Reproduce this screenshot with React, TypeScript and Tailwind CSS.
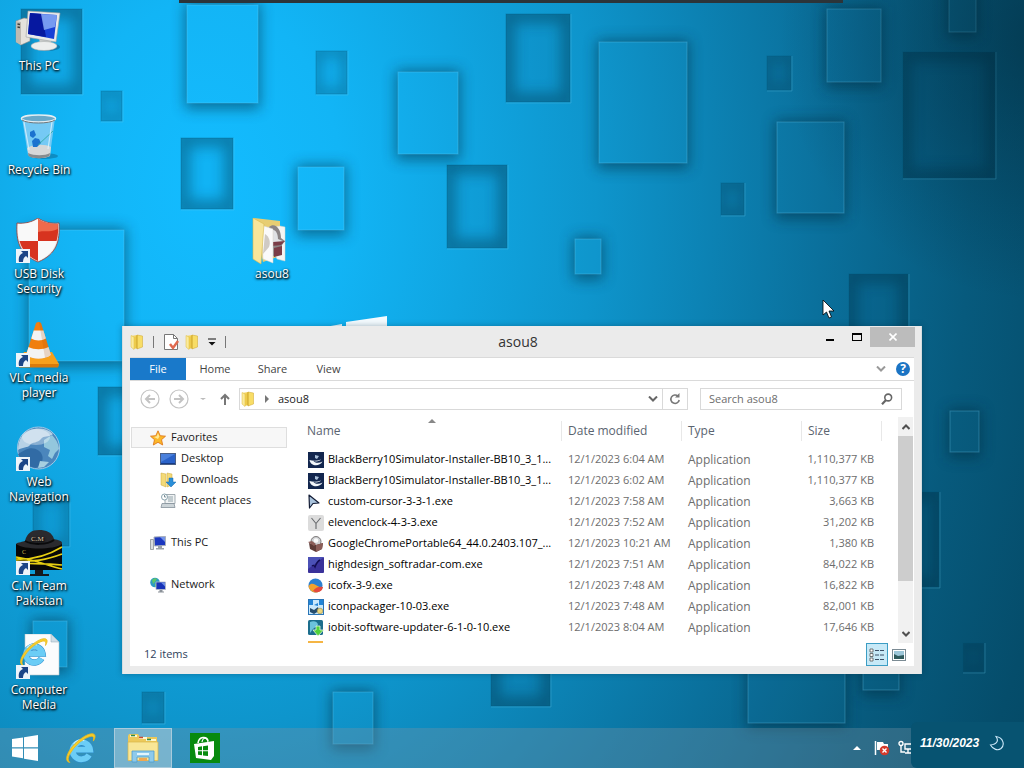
import { useState } from 'react';
import type { ReactNode } from 'react';
import clsx from 'clsx';

type Tile = [x: number, y: number, w: number, h: number];

const RAISED: Tile[] = [
  [187, 5, 71, 98],
  [298, 167, 46, 63],
  [398, 72, 60, 82],
  [599, 42, 88, 121],
  [575, 239, 26, 35],
  [29, 230, 95, 131],
  [33, 621, 34, 46],
  [333, 692, 40, 52],
  [748, 640, 97, 83],
  [863, 640, 36, 50],
  [950, 411, 29, 41],
  [777, 122, 67, 91],
  [827, 9, 54, 73],
  [949, -20, 27, 52],
];

const SUNKEN: Tile[] = [
  [21, 9, 61, 85],
  [101, 91, 21, 30],
  [181, 138, 52, 71],
  [316, 51, 31, 43],
  [506, 14, 64, 88],
  [447, 165, 60, 83],
  [98, 387, 70, 68],
  [33, 496, 36, 50],
  [142, 692, 22, 31],
  [491, 640, 59, 66],
  [963, 643, 21, 29],
  [895, 492, 44, 95],
  [849, 274, 59, 85],
  [903, 52, 92, 126],
  [767, 56, 24, 34],
  [721, 183, 23, 32],
];

function Wallpaper() {
  return (
    <svg className="absolute inset-0 h-full w-full" viewBox="0 0 1024 768" preserveAspectRatio="xMidYMid slice" aria-hidden="true">
      <defs>
        <radialGradient id="sky" gradientUnits="userSpaceOnUse" cx="0" cy="0" r="1" gradientTransform="translate(205 190) scale(980 1350)">
          <stop offset="0" stopColor="#13bcff" />
          <stop offset="0.14" stopColor="#12b5f6" />
          <stop offset="0.4" stopColor="#0e95cc" />
          <stop offset="0.63" stopColor="#0a709c" />
          <stop offset="0.78" stopColor="#075a7d" />
          <stop offset="0.9" stopColor="#054d6b" />
          <stop offset="1" stopColor="#044661" />
        </radialGradient>
        <radialGradient id="corner" gradientUnits="userSpaceOnUse" cx="1040" cy="40" r="260">
          <stop offset="0" stopColor="#01202e" stopOpacity="0.45" />
          <stop offset="1" stopColor="#01202e" stopOpacity="0" />
        </radialGradient>
        <filter id="soft" x="-50%" y="-50%" width="200%" height="200%">
          <feGaussianBlur stdDeviation="7" />
        </filter>
      </defs>
      <rect width="1024" height="768" fill="url(#sky)" />
      {SUNKEN.map(([x, y, w, h]) => (
        <g key={`${x}-${y}`}>
          <svg x={x} y={y} width={w} height={h} overflow="hidden">
            <rect width={w} height={h} fill="#013a55" opacity="0.06" />
            <rect width={w} height={h} fill="none" stroke="#012a3e" strokeWidth={w < 40 ? 8 : 18} opacity="0.38" filter="url(#soft)" />
          </svg>
          <rect x={x} y={y} width={w} height={h} fill="none" stroke="#02506f" strokeOpacity="0.3" />
          <path d={`M${x} ${y + h + 1}h${w + 1}V${y}`} fill="none" stroke="#6fd2f5" strokeOpacity="0.25" />
        </g>
      ))}
      {RAISED.map(([x, y, w, h]) => (
        <g key={`${x}-${y}`}>
          <rect x={x - 2} y={y - 2} width={w + 4} height={h + 8} fill="#012a3e" opacity="0.5" filter="url(#soft)" />
          <rect x={x} y={y} width={w} height={h} fill="url(#sky)" />
          <rect x={x} y={y} width={w} height={h} fill="#5cd0ff" fillOpacity="0.02" stroke="#7fdcff" strokeOpacity="0.28" />
        </g>
      ))}
      <rect width="1024" height="768" fill="url(#corner)" />
      <path d="M325 327l17-3v6h-17zM346 327v-5l41-6v14h-41z" fill="#f4fbff" />
      <rect x="179" width="664" height="3" fill="#2c3439" />
    </svg>
  );
}

function ShortcutArrow() {
  return (
    <g>
      <rect x="1" y="31" width="14" height="14" fill="#eef4fa" />
      <path d="M4 44c-1-5 1-8 4-9l-2-2h7v7l-2-2c-2 1-3 3-3 6z" fill="#1c4587" />
    </g>
  );
}

function BigIcon({ children, shortcut }: { children: ReactNode; shortcut?: boolean }) {
  return (
    <svg className="h-12 w-12" viewBox="0 0 48 48" aria-hidden="true">
      {children}
      {shortcut && <ShortcutArrow />}
    </svg>
  );
}

// The "e" with its golden orbit, on a 30x30 grid
function IeMark() {
  return (
    <g fill="none">
      <path d="M23.500 21.500a8.300 8 0 1 1 1-5H10" stroke="#2e8ccb" strokeWidth="6.400" />
      <path d="M23.500 21.500a8.300 8 0 1 1 1-5H10" stroke="#6bcdf6" strokeWidth="5.400" />
      <path d="M9 11c2-3 6-4.500 10-3" stroke="#c9effd" strokeWidth="1.200" />
      <path d="M5.500 28.500c-5-.5-3.500-8 2.500-15C14 6.500 24 0 28 2c2 1.200 1 4-.5 6.500.5-3 .3-4.500-1.500-4.500-4 0-12 5-17 11.500S2.500 26 5.500 28.500z" fill="#f7cd2a" stroke="#e8b91e" strokeWidth="0.800" />
    </g>
  );
}

const ThisPcIcon = () => (
  <BigIcon>
    <path d="M1 11l8-3 6 1v22l-9 4-5-3z" fill="#e4e2dc" stroke="#8b8b88" strokeWidth="0.600" />
    <path d="M1 11l5 1v23l-5-3z" fill="#bdbab2" />
    <path d="M2.500 14l2.500.5M2.500 17l2.500.5" stroke="#3f3f3c" strokeWidth="1.300" />
    <ellipse cx="32" cy="37" rx="13" ry="4" fill="#0b4f78" opacity="0.5" />
    <path d="M24 27h11l2 8H25z" fill="#c9ccca" />
    <ellipse cx="29" cy="36" rx="13" ry="4.500" fill="#eceeed" stroke="#a5a9a8" strokeWidth="0.500" />
    <path d="M13 1l32 2-4 29-30-5z" fill="#e9eaea" stroke="#9c9fa1" strokeWidth="0.600" />
    <path d="M15 3l27 2-3 24-26-5z" fill="#1740d6" />
    <path d="M15 3l12 1 4 23-18-3z" fill="#0618a0" />
    <path d="M26 4l16 1-2 12-11 3z" fill="#8fb0f7" opacity="0.8" />
  </BigIcon>
);

const RecycleIcon = () => (
  <BigIcon>
    <ellipse cx="29" cy="42" rx="14" ry="3" fill="#0a4668" opacity="0.35" />
    <path d="M7 4l6 37c6 4 16 4 22 0l5-37z" fill="#8fd0f5" opacity="0.8" />
    <path d="M12 34c7-4 18-4 24-1l-1 9c-6 3-16 3-21 0z" fill="#d5d7d8" />
    <path d="M13 39c6 3 17 3 22 0l-.5 3c-6 3-16 3-21 0z" fill="#878b8e" />
    <path d="M15 18l4-2 2 5-3 3-3-2zM17 27l3-3 4 1 2 4-4 4h-4z" fill="#1b72cf" />
    <path d="M38 17L23 31" stroke="#2aa79c" strokeWidth="0.800" />
    <path d="M9 8l5 28M37 8l-4 27" stroke="#e8f8ff" strokeWidth="1.200" opacity="0.7" />
    <ellipse cx="23.500" cy="4.500" rx="17" ry="3.500" fill="#6aa9c9" stroke="#e5eef2" strokeWidth="1.500" />
    <path d="M7 6c5 4 28 4 33 0" stroke="#70777b" strokeWidth="1" fill="none" />
  </BigIcon>
);

const ShieldIcon = () => (
  <BigIcon shortcut>
    <path d="M2 5c8 1 15-1 21-5 6 4 13 6 21 5 1 18-2 31-21 39C4 36 1 23 2 5z" fill="#e9e9ea" stroke="#9a3a31" strokeWidth="0.800" />
    <path d="M23 1c6 4 12 5 20 5 .4 7 0 12-1.500 17H23zM23 23v20C12 38 6.500 31 4.500 23z" fill="#d7331f" />
    <path d="M23 1c6 4 12 5 20 5l-.3 5C34 15 28 12 23 14z" fill="#ef6a4c" />
    <path d="M23 1C17 5 11 6 3 6c-.4 7 0 12 1.500 17H23zM23 23v20c11-5 16.500-12 18.500-20z" fill="#fbfbfc" opacity="0.85" />
  </BigIcon>
);

const VlcIcon = () => (
  <BigIcon shortcut>
    <path d="M9 30L3 42l1 3h39l1-3-7-12z" fill="#f7a01c" />
    <path d="M3 42h41l-1 3.500H4z" fill="#d97a0a" />
    <path d="M21 1q2.500-2 5 0l10 32c-6 5-19 5-25 0z" fill="#f07f10" />
    <path d="M18.700 8.500h9.700l2.500 8c-4 2.500-10.500 2.500-14.700 0zM13.500 25c6 3 14 3 20 0l2.500 8c-7 5-18 5-25 0z" fill="#f3f3f3" />
    <path d="M26 1l10 32-6 3L24 0z" fill="#b7550a" opacity="0.2" />
  </BigIcon>
);

const GlobeIcon = () => (
  <BigIcon shortcut>
    <circle cx="23.500" cy="22" r="21" fill="#4b86bc" stroke="#9fc8e6" />
    <path d="M7 10C14 1 30 0 38 8c-5 4-9 1-12 5s-9 3-11 6-8 2-12 5c0-5 1-10 4-14z" fill="#b7d2e6" />
    <path d="M29 14l8-5c5 5 7 11 7 14l-4 4-3 6-4-3 2-6-6-3z" fill="#93c7dd" />
    <path d="M10 24c8-4 15 0 17 5s-1 10-6 13C12 41 5 34 3 28z" fill="#316ba5" />
    <path d="M25 35l9 1-5 5-6 1z" fill="#a6cfe0" />
    <ellipse cx="21" cy="11" rx="14" ry="8" fill="#fff" opacity="0.35" />
  </BigIcon>
);

const CmIcon = () => (
  <BigIcon shortcut>
    <rect x="1" y="14" width="46" height="26" fill="#080808" />
    <path d="M1 29C18 30 32 26 47 17M1 31c18 1 30-1 46-7M1 33c18 1 30 0 46 2M1 27c20 3 30 8 46 12" stroke="#e8cf12" strokeWidth="1.700" fill="none" />
    <path d="M20 40h8v4h6v2H15v-2h5z" fill="#16181c" />
    <path d="M1 14c2-2 7-2 9-3C12 3 17 0 24 0s13 2 15 9c4 1 9 2 8 5-8 6-38 6-46 0z" fill="#2a2a2e" />
    <path d="M10 11c7 4 22 4 29-1" stroke="#0c0c0d" strokeWidth="2" fill="none" />
    <text x="16" y="11" fontSize="7" fontFamily="Liberation Serif, serif" fill="#e3cda8">C.M</text>
    <text x="7" y="24" fontSize="6" fontFamily="Liberation Serif, serif" fill="#d8bb56">C</text>
  </BigIcon>
);

const MediaIcon = () => (
  <BigIcon shortcut>
    <path d="M10 0h26l8 8v33H10z" fill="#fbfcfd" stroke="#b9c6cf" strokeWidth="0.600" />
    <path d="M36 0v8h8z" fill="#cfdde7" stroke="#8fa8b7" strokeWidth="0.500" />
    <g transform="translate(3 3)">
      <IeMark />
    </g>
  </BigIcon>
);

const FolderIcon = () => (
  <BigIcon>
    <path d="M5 0l27 3v35l-17 6z" fill="#e7cd72" />
    <path d="M15 10l17-2 5 1v34l-8-2z" fill="#f5f5f3" stroke="#d9d4c4" strokeWidth="0.500" />
    <path d="M21 9c6-5 12 2 12 11l4 3-3 4v9l-12 3z" fill="#8b8485" />
    <path d="M22 14c4-5 8 0 8 7l7 3-12 4z" fill="#dfe1e4" />
    <path d="M25 24l12-1-4 4-8 1zM26 30l8-2v9l-8 2z" fill="#7b3d47" />
    <path d="M13 7l12 4v34l-10-4z" fill="#fafafa" stroke="#d5d2ca" strokeWidth="0.500" />
    <path d="M17 16c4 2 6 8 4 13l-6 7z" fill="#bcb5ad" opacity="0.7" />
    <path d="M5 0l11 6-3 40-8-5z" fill="#f7e59a" stroke="#d8b94f" strokeWidth="0.600" />
  </BigIcon>
);

const SHORTCUTS = [
  { label: 'This PC', icon: <ThisPcIcon /> },
  { label: 'Recycle Bin', icon: <RecycleIcon /> },
  { label: 'USB Disk Security', icon: <ShieldIcon /> },
  { label: 'VLC media player', icon: <VlcIcon /> },
  { label: 'Web Navigation', icon: <GlobeIcon /> },
  { label: 'C.M Team Pakistan', icon: <CmIcon /> },
  { label: 'Computer Media', icon: <MediaIcon /> },
];

function DesktopItem({ label, icon }: { label: string; icon: ReactNode }) {
  return (
    <button className="flex h-[104px] w-[78px] flex-col items-center px-1 pt-[10px] text-xs leading-[15px] text-white [text-shadow:1px_1px_2px_#000,0_1px_3px_#000]">
      {icon}
      <span>{label}</span>
    </button>
  );
}

function SmallFolder() {
  return (
    <svg className="h-4 w-4 shrink-0" viewBox="0 0 16 16" aria-hidden="true">
      <path d="M2 2l6-1v13H4z" fill="#f3d566" />
      <path d="M2 1.500l3 1.500v12.500L2 13z" fill="#fbeb9c" stroke="#dcb93e" strokeWidth="0.500" />
      <path d="M5 3l3-1v12l-3 1z" fill="#edcb4c" />
      <path d="M8 1l5.500 1v11L8 15z" fill="#f8dd66" stroke="#cfa52a" strokeWidth="0.500" />
      <path d="M8 1v14" stroke="#c79c22" strokeWidth="0.600" />
    </svg>
  );
}

const NavIcon = ({ children }: { children: ReactNode }) => (
  <svg className="h-4 w-4 shrink-0" viewBox="0 0 16 16" aria-hidden="true">
    {children}
  </svg>
);

const starIcon = (
  <NavIcon>
    <path d="M8 .8l2.200 4.900 5.300.5-4 3.500 1.200 5.300L8 12.300 3.300 15l1.200-5.300-4-3.500 5.300-.5z" fill="#fbb829" stroke="#e0791b" strokeWidth="0.900" />
    <path d="M8 3l1.400 3.500L8 9 4 7l2.700-.7z" fill="#ffe896" />
  </NavIcon>
);

const desktopIcon = (
  <NavIcon>
    <rect x="0.500" y="2.500" width="15" height="11" fill="#2a62c9" stroke="#4a5f86" />
    <path d="M1 3h14L1 11z" fill="#4a80dc" />
    <path d="M1 12.500h14" stroke="#173c86" />
  </NavIcon>
);

const downloadsIcon = (
  <NavIcon>
    <path d="M1 1l5 1v13l-5-2zM7 1l5 1v11l-5 2z" fill="#f3da78" stroke="#cda93c" strokeWidth="0.500" />
    <path d="M9 6h4v4h3l-5 5-5-5h3z" fill="#2a8fd8" stroke="#1b68ac" strokeWidth="0.500" />
  </NavIcon>
);

const recentIcon = (
  <NavIcon>
    <path d="M5 1.500h10v9H5z" fill="#f0f3f4" stroke="#8b979e" strokeWidth="0.800" />
    <path d="M8 4h5M8 6h5M8 8h5" stroke="#7c919b" strokeWidth="0.800" />
    <path d="M2 10.500h12l1 4H1z" fill="#ccd4d8" stroke="#84919a" strokeWidth="0.800" />
    <circle cx="4.500" cy="4" r="3" fill="#fff" stroke="#6f8e9b" strokeWidth="0.800" />
    <path d="M4.500 2v2H6" stroke="#476470" strokeWidth="0.700" fill="none" />
  </NavIcon>
);

const pcIcon = (
  <NavIcon>
    <path d="M.5 4.500h3v10h-3z" fill="#d9dcde" stroke="#7c8287" strokeWidth="0.700" />
    <path d="M4 2l11.500-.5v9L4.500 11z" fill="#1c38c0" stroke="#a9b0ba" />
    <path d="M10 2h5v5z" fill="#7393ea" />
    <path d="M8 11h4v2h2v1.500H6V13h2z" fill="#9ca2a8" />
  </NavIcon>
);

const networkIcon = (
  <NavIcon>
    <circle cx="5" cy="5.500" r="4.800" fill="#2d9bc4" />
    <path d="M2 3c2-2 4-2 5-1L5 5 3 7zM5 7l3-1v3L5 10z" fill="#5dc56a" />
    <path d="M6 5h9.500v7.500H6z" fill="#1733b8" stroke="#b8bec7" strokeWidth="0.800" />
    <path d="M11 5.500h4v4z" fill="#6c8de6" />
    <path d="M9.500 13h3v1.500h1.500v1H8v-1h1.500z" fill="#8b9299" />
  </NavIcon>
);

const bbIcon = (
  <NavIcon>
    <rect width="16" height="16" fill="#12264e" />
    <path d="M1.500 8c1 6.500 10 7 13 1.500-3.500 2-8 1.500-9-.5 3 1 6.500 0 7.500-1.500C9 9 5 9 1.500 8z" fill="#f2f6fa" />
    <path d="M7 3l4 1-2 3-2-1z" fill="#a9bfd9" />
  </NavIcon>
);

const cursorIcon = (
  <NavIcon>
    <path d="M1 1l10 8-6 .5L1.500 14z" fill="#a9c3dc" stroke="#131c35" strokeWidth="1.200" strokeLinejoin="round" />
  </NavIcon>
);

const clockIcon = (
  <NavIcon>
    <rect width="16" height="16" rx="2" fill="#dcdcdc" />
    <path d="M3.500 3L8 8.500 12.500 3M8 8.500V14" stroke="#66696c" strokeWidth="1.100" fill="none" />
  </NavIcon>
);

const boxIcon = (
  <NavIcon>
    <circle cx="8" cy="5.500" r="5" fill="#cfd1d3" stroke="#65605f" strokeWidth="0.800" />
    <path d="M1 7l7 2 7-2-1 6-6 3-6-3z" fill="#5d3b37" />
    <path d="M8 9l7-2-1 6-6 3zM0 6l4-1 4 3-2 2z" fill="#8b5d58" />
    <circle cx="8" cy="4.500" r="2.300" fill="#fafafa" />
  </NavIcon>
);

const designIcon = (
  <NavIcon>
    <rect width="16" height="16" rx="1" fill="#3a329a" />
    <path d="M0 0h16L0 12z" fill="#4b51b6" />
    <path d="M4 9c1-1 2-1 3 1 1-3 3-6 5-7" stroke="#120d52" strokeWidth="1.400" fill="none" />
  </NavIcon>
);

const icofxIcon = (
  <NavIcon>
    <circle cx="7.500" cy="7.500" r="7" fill="#2c80cf" />
    <path d="M.5 8c3-4 6-2 9 0s4 1 5 1c-1 4-4 5.500-7 5.500S1 12 .5 8z" fill="#f2a22c" />
    <path d="M5 13c2-2 4-5 10-4-.5 4-5 7-10 4z" fill="#e34a3e" />
  </NavIcon>
);

const packagerIcon = (
  <NavIcon>
    <rect x="0.500" y="0.500" width="15" height="15" fill="#c9e8fb" stroke="#2a75b7" />
    <path d="M1 1h4v5H1zM11 1h4v5h-4zM6 6l4-2v3z" fill="#2385d6" />
    <path d="M2 9l4 2 4-3 1 4-5 3-4-2z" fill="#264d6c" />
    <circle cx="12" cy="12" r="2.800" fill="#ecd67f" stroke="#9b8c46" strokeWidth="0.600" />
  </NavIcon>
);

const iobitIcon = (
  <NavIcon>
    <rect width="15" height="15" rx="1.500" fill="#1c6e8d" />
    <path d="M2 2c4-2 8 0 8 3L5 9 2 13z" fill="#6cc3dc" />
    <path d="M8 6h4v4h3.500l-5.500 6-5-6h3z" fill="#52d23a" stroke="#e7f7df" strokeWidth="0.800" />
  </NavIcon>
);

const orangeIcon = (
  <NavIcon>
    <rect width="15" height="15" fill="#f5b544" />
  </NavIcon>
);

const FILES = [
  { icon: bbIcon, name: 'BlackBerry10Simulator-Installer-BB10_3_1...', date: '12/1/2023 6:04 AM', size: '1,110,377 KB' },
  { icon: bbIcon, name: 'BlackBerry10Simulator-Installer-BB10_3_1...', date: '12/1/2023 6:02 AM', size: '1,110,377 KB' },
  { icon: cursorIcon, name: 'custom-cursor-3-3-1.exe', date: '12/1/2023 7:58 AM', size: '3,663 KB' },
  { icon: clockIcon, name: 'elevenclock-4-3-3.exe', date: '12/1/2023 7:52 AM', size: '31,202 KB' },
  { icon: boxIcon, name: 'GoogleChromePortable64_44.0.2403.107_...', date: '12/1/2023 10:21 AM', size: '1,380 KB' },
  { icon: designIcon, name: 'highdesign_softradar-com.exe', date: '12/1/2023 7:51 AM', size: '84,022 KB' },
  { icon: icofxIcon, name: 'icofx-3-9.exe', date: '12/1/2023 7:48 AM', size: '16,822 KB' },
  { icon: packagerIcon, name: 'iconpackager-10-03.exe', date: '12/1/2023 7:48 AM', size: '82,001 KB' },
  { icon: iobitIcon, name: 'iobit-software-updater-6-1-0-10.exe', date: '12/1/2023 8:04 AM', size: '17,646 KB' },
];

function TitleBar() {
  return (
    <header className="relative flex h-[31px] items-center justify-between pl-[6px]">
      <div className="flex items-center text-[#555]">
        <SmallFolder />
        <span className="mx-2 h-3 w-px bg-[#777]" />
        <button aria-label="Properties" className="ml-px">
          <svg className="h-[18px] w-4" viewBox="0 0 16 18">
            <path d="M1.500 1.500h9l4 4v11h-13z" fill="#fff" stroke="#777" />
            <path d="M10.500 1.500v4h4" fill="none" stroke="#777" />
            <path d="M7 11l3 4 5-7" stroke="#e0694f" strokeWidth="2.500" fill="none" />
          </svg>
        </button>
        <button aria-label="New folder" className="ml-[5px]"><SmallFolder /></button>
        <button aria-label="Customize toolbar" className="ml-2">
          <svg className="h-2 w-2" viewBox="0 0 8 8"><path d="M0 1h8" stroke="#111" /><path d="M.5 4h7L4 7.500z" fill="#111" /></svg>
        </button>
        <span className="ml-[9px] h-3 w-px bg-[#777]" />
      </div>
      <h1 className="pointer-events-none absolute top-[6px] right-10 left-8 text-center text-sm leading-5 text-[#333]">asou8</h1>
      <div className="flex self-start pt-px pr-[6px]">
        <button aria-label="Minimize" className="flex h-5 w-[27px] items-center justify-center pt-[6px]"><span className="h-[2px] w-2 bg-black" /></button>
        <button aria-label="Maximize" className="flex h-5 w-[27px] items-center justify-center"><span className="h-2 w-[10px] border border-t-2 border-black" /></button>
        <button aria-label="Close" className="flex h-5 w-[45px] items-center justify-center bg-[#bcbcbc]">
          <svg className="h-2 w-2" viewBox="0 0 8 8"><path d="M.5.5l7 7M7.500.5l-7 7" stroke="#fff" strokeWidth="1.600" /></svg>
        </button>
      </div>
    </header>
  );
}

function Ribbon() {
  return (
    <nav className="flex h-6 border-y border-[#dadada] bg-white text-[11px] text-[#444]">
      <button className="w-14 bg-[#1979ca] text-white">File</button>
      <button className="w-[58px]">Home</button>
      <button className="w-[57px]">Share</button>
      <button className="w-[55px]">View</button>
      <div className="ml-auto flex items-center gap-[10px] pr-1">
        <button aria-label="Expand the ribbon">
          <svg className="h-[6px] w-[10px]" viewBox="0 0 10 6"><path d="M1 .5l4 4 4-4" stroke="#999" strokeWidth="2" fill="none" /></svg>
        </button>
        <button aria-label="Help" className="flex h-[14px] w-[14px] items-center justify-center rounded-full bg-[#1b74c4] text-xs font-bold leading-none text-white">?</button>
      </div>
    </nav>
  );
}

function AddressRow() {
  const [query, setQuery] = useState('');
  return (
    <div className="flex h-9 items-center pr-3 pl-[10px]">
      <button aria-label="Back" className="mr-[9px]">
        <svg className="h-5 w-5" viewBox="0 0 20 20" fill="none" stroke="#c3c3c3"><circle cx="10" cy="10" r="9" strokeWidth="1.200" /><path d="M15 10H6M10 6l-4 4 4 4" strokeWidth="2" /></svg>
      </button>
      <button aria-label="Forward" className="mr-[10px]">
        <svg className="h-5 w-5" viewBox="0 0 20 20" fill="none" stroke="#c3c3c3"><circle cx="10" cy="10" r="9" strokeWidth="1.200" /><path d="M5 10h9M10 6l4 4-4 4" strokeWidth="2" /></svg>
      </button>
      <button aria-label="Recent locations" className="mr-3">
        <svg className="h-1 w-2" viewBox="0 0 8 4"><path d="M1 1h6L4 3z" fill="#bbb" /></svg>
      </button>
      <button aria-label="Up" className="mr-2">
        <svg className="h-3 w-3" viewBox="0 0 12 12"><path d="M6 12V2M2 6l4-4 4 4" stroke="#777" strokeWidth="2" fill="none" /></svg>
      </button>
      <div className="flex h-[22px] flex-1 items-center border border-[#d9d9d9] text-[11px]">
        <SmallFolder />
        <svg className="mx-2 h-2 w-[6px]" viewBox="0 0 6 8"><path d="M1 0l4 4-4 4z" fill="#777" /></svg>
        <button>asou8</button>
        <button aria-label="Previous locations" className="mr-1 ml-auto">
          <svg className="h-[6px] w-[10px]" viewBox="0 0 10 6"><path d="M1 .5l4 4 4-4" stroke="#666" strokeWidth="2" fill="none" /></svg>
        </button>
        <button aria-label="Refresh" className="flex h-full w-[25px] items-center justify-center border-l border-[#d9d9d9]">
          <svg className="h-3 w-3" viewBox="0 0 12 12"><path d="M9 3.200A4.200 4.200 0 1 0 10.200 7" stroke="#777" strokeWidth="1.600" fill="none" /><path d="M6 4.500h4.500V0z" fill="#777" /></svg>
        </button>
      </div>
      <label className="ml-3 flex h-[22px] w-[202px] items-center border border-[#d9d9d9] px-2 text-[11px]">
        <input aria-label="Search asou8" placeholder="Search asou8" value={query} onChange={(e) => setQuery(e.target.value)} className="min-w-0 flex-1 bg-transparent placeholder:text-[#6d6d6d] outline-none" />
        <svg className="h-3 w-3" viewBox="0 0 12 12" fill="none" stroke="#666"><circle cx="7.200" cy="4.500" r="3.400" strokeWidth="1.600" /><path d="M5 7L1 11.200" strokeWidth="2.200" /></svg>
      </label>
    </div>
  );
}

function NavItem({ icon, label, nested }: { icon: ReactNode; label: string; nested?: boolean }) {
  return (
    <button className={clsx('flex h-[21px] w-full items-center gap-[5px]', nested ? 'pl-[30px]' : 'pl-5')}>
      {icon}
      {label}
    </button>
  );
}

function Sidebar() {
  return (
    <aside className="flex w-[170px] shrink-0 flex-col pt-[10px] text-[11px]">
      <button className="ml-px flex h-[21px] w-[156px] items-center gap-[5px] border border-[#dedede] bg-[#f7f7f7] pl-[18px]">
        {starIcon}
        Favorites
      </button>
      <NavItem icon={desktopIcon} label="Desktop" nested />
      <NavItem icon={downloadsIcon} label="Downloads" nested />
      <NavItem icon={recentIcon} label="Recent places" nested />
      <div className="mt-[21px]"><NavItem icon={pcIcon} label="This PC" /></div>
      <div className="mt-[21px]"><NavItem icon={networkIcon} label="Network" /></div>
    </aside>
  );
}

function Heading({ children, sorted }: { children: string; sorted?: boolean }) {
  return (
    <th className="relative h-8 p-0 pb-1 text-left font-normal text-[#5a6470]">
      <button className="w-full border-r border-[#e8e8e8] pl-[6px] text-left text-xs leading-5">{children}</button>
      {sorted && <svg className="absolute top-[2px] left-1/2 h-1 w-2 -translate-x-1" viewBox="0 0 8 4"><path d="M0 4l4-4 4 4z" fill="#888" /></svg>}
    </th>
  );
}

function FileTable() {
  return (
    <div className="min-w-0 flex-1 overflow-hidden pl-px">
      <table className="w-full table-fixed border-collapse text-[11px]">
        <colgroup>
          <col />
          <col className="w-[120px]" />
          <col className="w-[120px]" />
          <col className="w-[80px]" />
          <col className="w-4" />
        </colgroup>
        <thead>
          <tr>
            <Heading sorted>Name</Heading>
            <Heading>Date modified</Heading>
            <Heading>Type</Heading>
            <Heading>Size</Heading>
            <td />
          </tr>
        </thead>
        <tbody className="text-[#6d6d6d]">
          {FILES.map((file, i) => (
            <tr key={i} className="h-[21px] whitespace-nowrap">
              <td className="p-0 pl-[7px] text-black">
                <div className="flex items-center gap-1">
                  {file.icon}
                  {file.name}
                </div>
              </td>
              <td className="p-0 pl-[6px]">{file.date}</td>
              <td className="p-0 pl-[6px] text-xs">Application</td>
              <td className="p-0 pr-2 text-right">{file.size}</td>
              <td />
            </tr>
          ))}
          <tr className="h-[21px]">
            <td className="p-0 pl-[7px]">{orangeIcon}</td>
          </tr>
        </tbody>
      </table>
    </div>
  );
}

function ScrollBar() {
  return (
    <div className="flex w-[15px] shrink-0 flex-col bg-[#f1f1f1]">
      <button aria-label="Scroll up" className="flex h-[19px] items-center justify-center">
        <svg className="h-[6px] w-2" viewBox="0 0 8 6"><path d="M.5 5L4 1.500 7.500 5" stroke="#505050" strokeWidth="2" fill="none" /></svg>
      </button>
      <div className="h-[145px] bg-[#cdcdcd]" />
      <button aria-label="Scroll down" className="mt-auto flex h-[19px] items-center justify-center">
        <svg className="h-[6px] w-2" viewBox="0 0 8 6"><path d="M.5 1L4 4.500 7.500 1" stroke="#505050" strokeWidth="2" fill="none" /></svg>
      </button>
    </div>
  );
}

function StatusBar() {
  return (
    <footer className="flex h-[23px] items-center justify-between pr-1 pl-[14px] text-[11px] text-[#2f3f5c]">
      <span>12 items</span>
      <div className="flex items-center">
        <button aria-label="Details view" className="flex h-[23px] w-[22px] items-center justify-center border border-[#3c9dc4] bg-[#c7e9f7]">
          <svg className="h-[14px] w-4" viewBox="0 0 16 14">
            <path d="M1 1h3v3H1zM1 5.500h3v3H1zM1 10h3v3H1z" fill="#fff" stroke="#555" strokeWidth="0.800" />
            <path d="M6 2.500h4m1 0h4M6 7h4m1 0h4M6 11.500h4m1 0h4" stroke="#3c4f66" />
          </svg>
        </button>
        <button aria-label="Thumbnail view" className="flex h-[23px] w-[22px] items-center justify-center">
          <svg className="h-3 w-[14px]" viewBox="0 0 14 12">
            <rect x="0.500" y="0.500" width="13" height="11" fill="#fff" stroke="#7b8b94" />
            <path d="M2 2h10v8H2z" fill="#9cc6d8" />
            <path d="M2 5l4 2 6-1v4H2z" fill="#2f5a5c" />
          </svg>
        </button>
      </div>
    </footer>
  );
}

function ExplorerWindow() {
  return (
    <section className="absolute top-[326px] right-[102px] left-[122px] border-x border-[#d5dde0] bg-[#ebebeb] px-[7px] pb-2 shadow-[0_0_6px_rgba(0,40,60,0.35)]">
      <div className="-mx-[7px]"><TitleBar /></div>
      <div className="bg-white text-[#1a1a1a]">
        <Ribbon />
        <AddressRow />
        <div className="flex h-[226px]">
          <Sidebar />
          <FileTable />
          <ScrollBar />
          <div className="w-px" />
        </div>
        <StatusBar />
      </div>
    </section>
  );
}

function Taskbar() {
  return (
    <footer className="relative flex h-10 items-stretch bg-[#7893a3]/35">
      <button aria-label="Start" className="flex w-[50px] items-center justify-center">
        <svg className="h-[26px] w-[26px]" viewBox="0 0 26 26" fill="#fff"><path d="M0 4l11-1.500V12.300H0zM12 2.300L26 0v12.300H12zM0 13.500h11v9.700L0 21.500zM12 13.500h14V26l-14-2.300z" /></svg>
      </button>
      <button aria-label="Internet Explorer" className="flex w-16 items-center justify-center pr-1">
        <svg className="h-8 w-8" viewBox="0 0 30 30"><IeMark /></svg>
      </button>
      <button aria-label="File Explorer" className="flex w-[58px] items-center justify-center border border-[#a9cbdc] bg-[#a5cadb]/60">
        <svg className="h-[30px] w-8" viewBox="0 0 32 30">
          <path d="M1 3l1-2h9l2 3h17v24H1z" fill="#edc95a" />
          <path d="M3 3h7M12 5h8M19 7h10" stroke="#fff7cf" strokeWidth="2" />
          <path d="M4 2.500h4M20 6.500h4" stroke="#2f8c4a" strokeWidth="1.500" />
          <path d="M12 4.500h4" stroke="#c94b32" strokeWidth="1.500" />
          <path d="M1 9h30v18.500H1z" fill="#f8e696" stroke="#d8b54a" strokeWidth="0.700" />
          <path d="M5 18h22v11h-5v-5H10v5H5z" fill="#8ecaeb" stroke="#4b9dcf" strokeWidth="0.800" />
          <path d="M10 21h12" stroke="#e2f5fd" strokeWidth="2" />
          <path d="M12 25h8v3h-8z" fill="#f0a851" />
        </svg>
      </button>
      <button aria-label="Store" className="flex w-[66px] items-center justify-center">
        <svg className="h-[30px] w-[30px]" viewBox="0 0 30 30">
          <rect width="30" height="30" fill="#078a0e" />
          <path d="M8 10c1-7 9-7 10-2" stroke="#fff" strokeWidth="1.600" fill="none" />
          <path d="M12 9c1-5 5-5 6 0" stroke="#fff" strokeWidth="1.200" fill="none" />
          <path d="M4 11l20-3v15l-3 4-15-2z" fill="#fff" />
          <path d="M8 14l4-.7v4H8zM13 13.200l5-.8v4.900h-5zM8 18.300h4v4l-4-.6zM13 18.300h5V23l-5-.6z" fill="#078a0e" />
        </svg>
      </button>
      <div className="mr-[112px] ml-auto flex items-center">
        <button aria-label="Show hidden icons" className="mr-[13px]">
          <svg className="h-1 w-2" viewBox="0 0 8 4"><path d="M0 4l4-4 4 4z" fill="#fff" /></svg>
        </button>
        <button aria-label="Action Center" className="mr-2">
          <svg className="h-4 w-4" viewBox="0 0 16 16">
            <path d="M1.500 1v14" stroke="#fff" strokeWidth="1.500" />
            <path d="M3 2h6l1 2h4v6H3z" fill="#fff" />
            <circle cx="10.500" cy="10.500" r="4.800" fill="#d43a2b" />
            <path d="M8.500 8.500l4 4m0-4l-4 4" stroke="#fff" strokeWidth="1.400" />
          </svg>
        </button>
        <button aria-label="Network">
          <svg className="h-4 w-[14px]" viewBox="0 0 14 16" fill="none" stroke="#fff">
            <circle cx="3" cy="3.500" r="2" strokeWidth="1.400" />
            <path d="M3 6v6h4M14 4H7v5h7M10 9v4M7 13h7" strokeWidth="1.400" />
          </svg>
        </button>
      </div>
      <div className="absolute right-0 bottom-0 flex h-[46px] w-[113px] items-start rounded-tl-md rounded-bl-md bg-[#075371] pt-[13px] pl-[9px] text-white">
        <time className="font-['Liberation_Sans',sans-serif] text-xs leading-4 font-bold italic">11/30/2023</time>
        <svg className="ml-[10px] h-4 w-4" viewBox="0 0 16 16"><path d="M7 1.500c3 4 1 8-5.500 8.500C4 14.500 9 16 12 13.500 16 10 14.500 2.500 7 1.500z" fill="none" stroke="#cfeafb" strokeWidth="1.100" /></svg>
      </div>
    </footer>
  );
}

export default function App() {
  return (
    <div className="relative flex min-h-screen flex-col overflow-hidden bg-[#0e93c9] font-['Open_Sans','Noto_Sans',sans-serif]">
      <Wallpaper />
      <main className="relative flex-1">
        <div className="flex flex-col">
          {SHORTCUTS.map((item) => (
            <DesktopItem key={item.label} {...item} />
          ))}
        </div>
        <div className="absolute top-[208px] left-[233px]">
          <DesktopItem label="asou8" icon={<FolderIcon />} />
        </div>
        <ExplorerWindow />
        <svg className="pointer-events-none absolute top-[299px] left-[822px] h-5 w-3" viewBox="0 0 12 20" aria-hidden="true">
          <path d="M1 1v15l3.500-3 2.500 6 2.500-1-2.500-6H12z" fill="#fff" stroke="#000" strokeWidth="0.800" />
        </svg>
      </main>
      <Taskbar />
    </div>
  );
}
